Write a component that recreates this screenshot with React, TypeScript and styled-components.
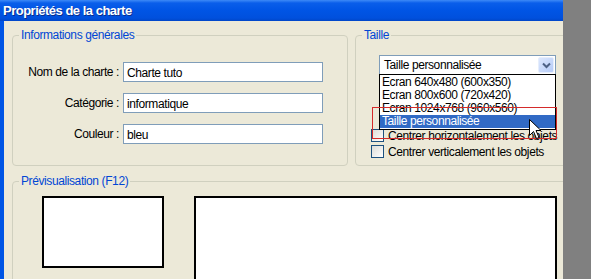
import React from 'react';
import styled, {createGlobalStyle} from 'styled-components';

const GlobalStyle = createGlobalStyle`
  html, body {
    margin: 0;
    padding: 0;
    background-color: #808080;
  }
  body {
    font-family: "Liberation Sans", Arial, sans-serif;
    font-size: 12px;
    letter-spacing: -0.4px;
  }
`

const Window = styled.div`
  position: relative;
  width: 563px;
  height: 279px;
  overflow: hidden;
  background-color: #ECE9D8;
  display: flex;
  flex-direction: column;
`
const TitleBar = styled.div`
  height: 21px;
  flex-shrink: 0;
  box-sizing: border-box;
  padding: 3px 0 0 3px;
  background: linear-gradient(#3D8AF7 0, #0A5EEA 3px, #0055E5 10px, #0050DD 18px, #0046C8 21px);
  color: white;
  font-weight: bold;
  font-size: 13px;
  line-height: 15px;
  letter-spacing: -0.5px;
  text-shadow: 1px 1px 0 #0A2E8C;
`
const Body = styled.div`
  flex: 1;
  display: flex;
  flex-direction: column;
  border-left: 4px solid #0055E5;
  padding: 7px 0 0 8px;
  gap: 8px;
`
const Row = styled.div`
  display: flex;
  gap: 7px;
`
const Group = styled.fieldset<{$width: number; $height: number}>`
  margin: 0;
  padding: 0;
  box-sizing: border-box;
  flex-shrink: 0;
  width: ${p => p.$width}px;
  height: ${p => p.$height}px;
  border: 1px solid #D0D0BF;
  border-radius: 4px;
  min-width: 0;
`
const Legend = styled.legend`
  margin-left: 6px;
  padding: 0 2px;
  color: #0046D5;
  font-size: 12px;
  line-height: 14px;
`
const Fields = styled.div`
  display: flex;
  flex-direction: column;
  gap: 11px;
  padding-top: 20px;
`
const FieldRow = styled.div`
  display: flex;
  align-items: center;
  gap: 4px;
`
const Label = styled.label`
  width: 106px;
  text-align: right;
  white-space: nowrap;
  color: #000;
`
const TextInput = styled.input`
  width: 200px;
  height: 20px;
  box-sizing: border-box;
  border: 1px solid #7F9DB9;
  padding: 1px 3px 0;
  font-family: inherit;
  font-size: 12px;
  letter-spacing: -0.4px;
  color: #000;
  background: white;
  outline: none;
`
const SizeBody = styled.div`
  position: relative;
  padding: 13px 0 0 23px;
`
const Combo = styled.div`
  position: relative;
  width: 177px;
  height: 20px;
  box-sizing: border-box;
  border: 1px solid #7F9DB9;
  background: white;
  display: flex;
  align-items: center;
  justify-content: space-between;
  padding: 0 1px 0 4px;
`
const ComboButton = styled.div`
  width: 16px;
  height: 16px;
  box-sizing: border-box;
  border: 1px solid #E6EEFC;
  border-radius: 2px;
  background: linear-gradient(135deg, #DCE7FD, #B6CCF8);
  display: flex;
  align-items: center;
  justify-content: center;
`
const DropList = styled.ul`
  position: absolute;
  left: -1px;
  top: 18px;
  width: 177px;
  box-sizing: border-box;
  margin: 0;
  padding: 1px 0;
  list-style: none;
  border: 1px solid #000;
  background: white;
  z-index: 2;
`
const Option = styled.li<{$selected?: boolean}>`
  height: 13px;
  line-height: 13px;
  padding-left: 2px;
  white-space: nowrap;
  color: ${p => p.$selected ? '#fff' : '#000'};
  background: ${p => p.$selected ? '#316AC5' : 'transparent'};
`
const Checks = styled.div`
  display: flex;
  flex-direction: column;
  gap: 3px;
  margin: 54px 0 0 -8px;
`
const CheckRow = styled.div`
  display: flex;
  align-items: center;
  gap: 4px;
  height: 13px;
  white-space: nowrap;
`
const CheckBox = styled.span`
  width: 13px;
  height: 13px;
  box-sizing: border-box;
  border: 1px solid #1C5180;
  background: linear-gradient(135deg, #DCDCD7, #FFFFFF);
  flex-shrink: 0;
`
const Highlight = styled.div`
  position: absolute;
  left: 16px;
  top: 65px;
  width: 185px;
  height: 32px;
  box-sizing: border-box;
  border: 1px solid #D42B2B;
  z-index: 3;
  pointer-events: none;
`
const Pointer = styled.svg`
  position: absolute;
  left: 529px;
  top: 119px;
  z-index: 4;
`
const Previews = styled.div`
  display: flex;
  gap: 30px;
  padding: 8px 0 0 29px;
`
const PreviewBox = styled.div<{$width: number; $height: number}>`
  width: ${p => p.$width}px;
  height: ${p => p.$height}px;
  box-sizing: border-box;
  border: 2px solid #000;
  background: white;
  flex-shrink: 0;
`

const sizes = [
    'Ecran 640x480 (600x350)',
    'Ecran 800x600 (720x420)',
    'Ecran 1024x768 (960x560)',
    'Taille personnalisée',
]

const App: React.FC = () => {
    return (
        <Window>
            <GlobalStyle/>
            <TitleBar>Propriétés de la charte</TitleBar>
            <Body>
                <Row>
                    <Group $width={336} $height={138}>
                        <Legend>Informations générales</Legend>
                        <Fields>
                            <FieldRow>
                                <Label>Nom de la charte :</Label>
                                <TextInput defaultValue="Charte tuto"/>
                            </FieldRow>
                            <FieldRow>
                                <Label>Catégorie :</Label>
                                <TextInput defaultValue="informatique"/>
                            </FieldRow>
                            <FieldRow>
                                <Label>Couleur :</Label>
                                <TextInput defaultValue="bleu"/>
                            </FieldRow>
                        </Fields>
                    </Group>
                    <Group $width={240} $height={138}>
                        <Legend>Taille</Legend>
                        <SizeBody>
                            <Combo>
                                <span>Taille personnalisée</span>
                                <ComboButton>
                                    <svg width="9" height="7" viewBox="0 0 9 7">
                                        <polyline points="1,1.5 4.5,5 8,1.5" fill="none" stroke="#4D6185" strokeWidth="2"/>
                                    </svg>
                                </ComboButton>
                                <DropList>
                                    {sizes.map((s, i) => (
                                        <Option key={s} $selected={i === sizes.length - 1}>{s}</Option>
                                    ))}
                                </DropList>
                            </Combo>
                            <Checks>
                                <CheckRow><CheckBox/>Centrer horizontalement les objets</CheckRow>
                                <CheckRow><CheckBox/>Centrer verticalement les objets</CheckRow>
                            </Checks>
                            <Highlight/>
                        </SizeBody>
                    </Group>
                </Row>
                <Group $width={600} $height={140}>
                    <Legend>Prévisualisation (F12)</Legend>
                    <Previews>
                        <PreviewBox $width={122} $height={72}/>
                        <PreviewBox $width={363} $height={110}/>
                    </Previews>
                </Group>
            </Body>
            <Pointer width="13" height="21" viewBox="0 0 13 21">
                <path d="M0.5,0.5 L0.5,16.5 L4.5,12.5 L7.5,19.5 L10,18.5 L7,11.5 L12,11.5 Z" fill="#fff" stroke="#000" strokeWidth="1"/>
            </Pointer>
        </Window>
    );
}

export default App
